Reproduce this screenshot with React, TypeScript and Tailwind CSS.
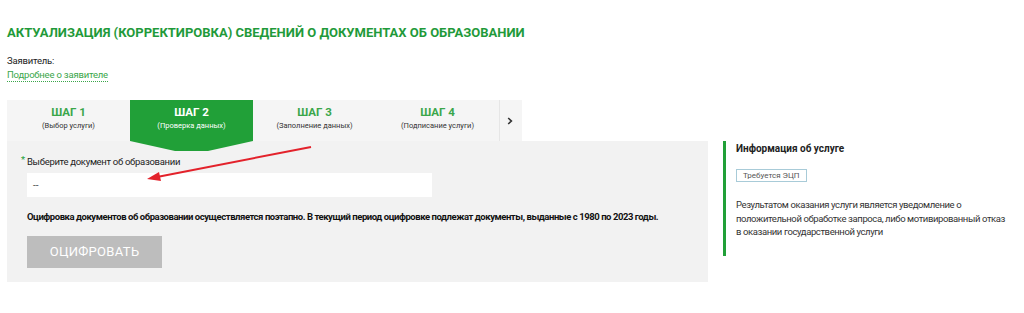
import React from 'react';

const steps = [
  { title: 'ШАГ 1', sub: '(Выбор услуги)' },
  { title: 'ШАГ 2', sub: '(Проверка данных)', active: true },
  { title: 'ШАГ 3', sub: '(Заполнение данных)' },
  { title: 'ШАГ 4', sub: '(Подписание услуги)' },
];

const App: React.FC = () => {
  return (
    <div className="w-[1024px] h-[313px] bg-white overflow-hidden font-['Roboto','DejaVu_Sans_Condensed',sans-serif] text-[#222]">
      <div className="pl-[7px] pt-[24px]">
        <h1 className="text-[13px] leading-[18px] font-bold text-[#1f9a3a]">
          АКТУАЛИЗАЦИЯ (КОРРЕКТИРОВКА) СВЕДЕНИЙ О ДОКУМЕНТАХ ОБ ОБРАЗОВАНИИ
        </h1>
        <div className="mt-[12px] text-[9.5px] leading-[14px] tracking-[-0.2px]">Заявитель:</div>
        <a className="block w-fit text-[9.5px] leading-[13px] tracking-[-0.2px] text-[#3aa64a] border-b border-dotted border-[#3aa64a]">
          Подробнее о заявителе
        </a>
      </div>

      <div className="flex mt-[18px]">
        <div className="w-[716px] pl-[7px]">
          {/* steps */}
          <div className="flex h-[41px] w-[515px] bg-[#f5f5f5]">
            {steps.map((s) => (
              <div
                key={s.title}
                className={`relative w-[123px] flex flex-col items-center pt-[5px] ${s.active ? 'bg-[#21a038]' : ''}`}
              >
                <div className={`text-[11.5px] leading-[15px] font-bold ${s.active ? 'text-white' : 'text-[#3aa64a]'}`}>
                  {s.title}
                </div>
                <div className={`text-[7.5px] leading-[11px] ${s.active ? 'text-white' : 'text-[#333]'}`}>{s.sub}</div>
                {s.active && (
                  <svg className="absolute left-0 top-[41px] z-10" width="123" height="11" viewBox="0 0 123 11">
                    <polygon points="0,0 123,0 78,10 45,10" fill="#21a038" />
                  </svg>
                )}
              </div>
            ))}
            <div className="w-[20px] border-l border-[#e6e6e6] flex items-center justify-center">
              <svg width="6" height="8" viewBox="0 0 6 8">
                <path d="M1.2 1 L4.4 4 L1.2 7" fill="none" stroke="#333" strokeWidth="1.6" />
              </svg>
            </div>
          </div>

          {/* panel */}
          <div className="relative w-[701px] h-[141px] bg-[#f2f2f2] pt-[14px] pl-[20px]">
            <div className="relative text-[9.5px] leading-[13px] tracking-[-0.3px] text-[#222]">
              <span className="absolute -left-[6px] -top-[2px] text-[#21a038]">*</span>
              Выберите документ об образовании
            </div>
            <div className="mt-[5px] w-[405px] h-[24px] bg-white flex items-center pl-[6px] text-[10px] text-[#555]">--</div>
            <p className="mt-[13px] text-[9.5px] leading-[13px] font-bold tracking-[-0.45px] text-[#111] whitespace-nowrap">
              Оцифровка документов об образовании осуществляется поэтапно. В текущий период оцифровке подлежат документы, выданные с 1980 по 2023 годы.
            </p>
            <button className="block mt-[13px] w-[135px] h-[32px] bg-[#bdbdbd] text-white text-[13px] tracking-[0.3px]">ОЦИФРОВАТЬ</button>
            <svg className="absolute left-0 top-0" width="701" height="60" viewBox="0 0 701 60">
              <line x1="304" y1="6" x2="150" y2="36" stroke="#e3222b" strokeWidth="2" />
              <polygon points="140,38 152,31 154,40" fill="#e3222b" />
            </svg>
          </div>
        </div>

        {/* info */}
        <div className="mt-[41px] ml-[7px] border-l-[3px] border-[#21a038] h-[115px] pl-[10px] pt-[1px] w-[290px]">
          <div className="text-[10px] leading-[13px] font-bold text-[#222]">Информация об услуге</div>
          <div className="mt-[14px] w-fit border border-[#a8cbd8] bg-white px-[6px] text-[8px] leading-[11px] text-[#555]">
            Требуется ЭЦП
          </div>
          <p className="mt-[16px] w-[272px] text-[9.5px] leading-[13.5px] tracking-[-0.4px] text-[#333]">
            Результатом оказания услуги является уведомление о положительной обработке запроса, либо мотивированный отказ в оказании государственной услуги
          </p>
        </div>
      </div>
    </div>
  );
};

export default App;
